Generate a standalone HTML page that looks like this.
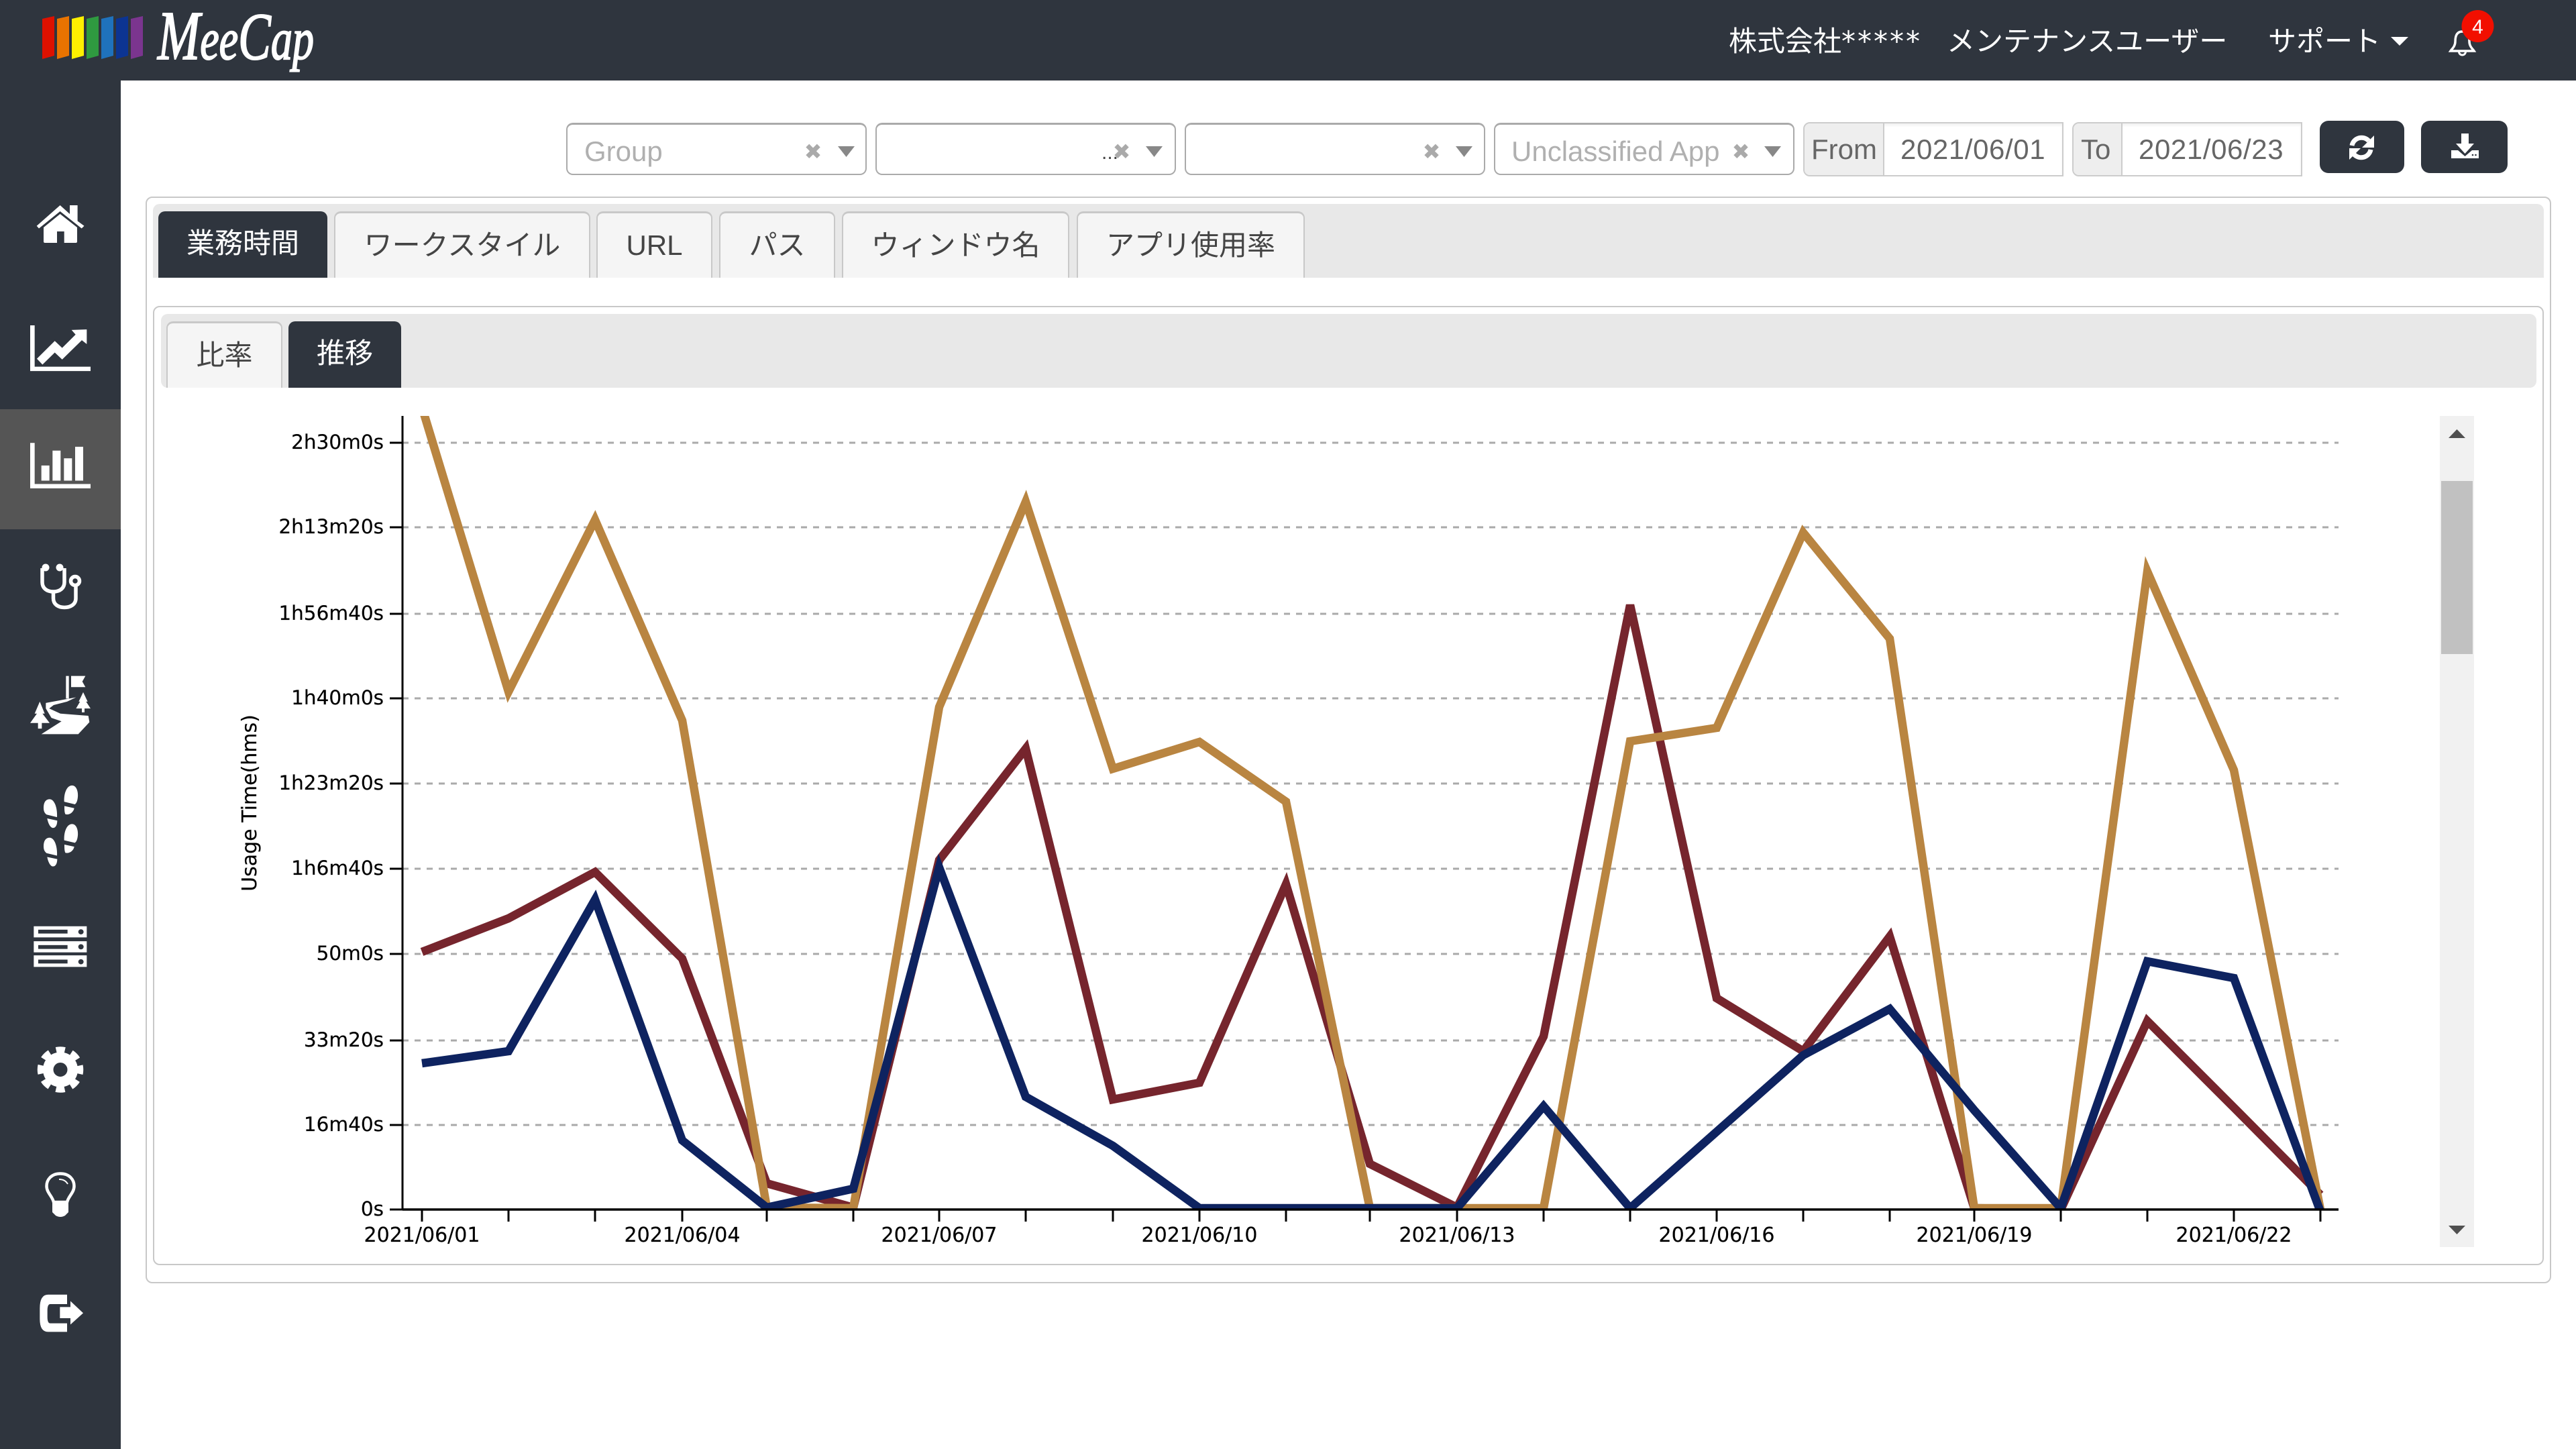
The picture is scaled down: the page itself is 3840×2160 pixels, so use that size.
<!DOCTYPE html>
<html lang="ja"><head><meta charset="utf-8"><title>MeeCap</title>
<style>
html,body{margin:0;padding:0;width:3840px;height:2160px;overflow:hidden;background:#fff}
body{position:relative;font-family:"Liberation Sans","Noto Sans CJK JP",sans-serif;font-size:42px;font-weight:400}
div{box-sizing:border-box}
.a{position:absolute}
.t{position:absolute;white-space:nowrap;line-height:42px;height:42px}
.sel{position:absolute;top:183px;width:448px;height:78px;border:2.5px solid #aaa;border-top-width:3px;border-radius:10px;background:#fff}
.ph{color:#b0b0b0}
.dt{color:#666}
.tab{position:absolute;top:315px;height:99px;background:#f5f5f5;border:2.5px solid #c8c8c8;border-top-width:3px;border-bottom:none;border-radius:10px 10px 0 0;color:#444;text-align:center;line-height:95px}
.act{background:#2f353e;border-color:#2f353e;color:#fff;line-height:89px}
.stab{top:479px;height:99px}
.box{position:absolute;border:2.5px solid #c8c8c8;border-radius:10px}
.btn{position:absolute;top:180px;height:78px;background:#2f353e;border-radius:13px}
.st{font-family:"DejaVu Sans",sans-serif;letter-spacing:3px}
</style></head><body>

<!-- header + sidebar -->
<div class="a" style="left:0;top:0;width:3840px;height:120px;background:#2f353e"></div>
<div class="a" style="left:0;top:0;width:180px;height:2160px;background:#2f353e"></div>
<div class="a" style="left:0;top:610px;width:180px;height:179px;background:#555"></div>

<!-- outer containers -->
<div class="box" style="left:217px;top:293px;width:3586px;height:1620px"></div>
<div class="a" style="left:228px;top:304px;width:3564px;height:110px;background:#e8e8e8;border-radius:10px 10px 0 0"></div>
<div class="box" style="left:228px;top:456px;width:3564px;height:1430px"></div>
<div class="a" style="left:240px;top:468px;width:3541px;height:110px;background:#e8e8e8;border-radius:10px 10px 10px 10px"></div>

<!-- tabs -->
<div class="tab act" style="left:236px;width:252px">業務時間</div>
<div class="tab" style="left:498px;width:382px">ワークスタイル</div>
<div class="tab" style="left:889px;width:173px">URL</div>
<div class="tab" style="left:1072px;width:173px">パス</div>
<div class="tab" style="left:1255px;width:339px">ウィンドウ名</div>
<div class="tab" style="left:1605px;width:340px">アプリ使用率</div>
<div class="tab stab" style="left:248px;width:173px">比率</div>
<div class="tab act stab" style="left:430px;width:168px">推移</div>

<!-- filters -->
<div class="sel" style="left:844px"></div>
<div class="sel" style="left:1305px"></div>
<div class="sel" style="left:1766px"></div>
<div class="sel" style="left:2227px"></div>
<div class="t ph" style="left:871px;top:205px">Group</div>
<div class="t ph" style="left:2253px;top:205px">Unclassified App</div>
<div class="t" style="left:1642px;top:213px;font-size:30px;line-height:30px;color:#444">...</div>

<!-- date ranges -->
<div class="a" style="left:2688px;top:182px;width:388px;height:81px;border:2.5px solid #ccc;border-right-width:2.5px;border-radius:10px 0 0 10px;background:#fff;box-shadow:inset 0 3px 3px rgba(0,0,0,.06)"></div>
<div class="a" style="left:2690px;top:184px;width:119px;height:77px;background:#eee;border-right:2.5px solid #ccc;border-radius:8px 0 0 8px"></div>
<div class="a" style="left:3089px;top:182px;width:343px;height:81px;border:2.5px solid #ccc;border-radius:10px 0 0 10px;background:#fff;box-shadow:inset 0 3px 3px rgba(0,0,0,.06)"></div>
<div class="a" style="left:3091px;top:184px;width:73px;height:77px;background:#eee;border-right:2.5px solid #ccc;border-radius:8px 0 0 8px"></div>
<div class="t dt" style="left:2700px;top:202px">From</div>
<div class="t dt" style="left:2833px;top:202px;letter-spacing:.6px">2021/06/01</div>
<div class="t dt" style="left:3102px;top:202px">To</div>
<div class="t dt" style="left:3188px;top:202px;letter-spacing:.6px">2021/06/23</div>
<div class="btn" style="left:3458px;width:126px"></div>
<div class="btn" style="left:3609px;width:129px"></div>

<!-- header text -->
<div class="t" style="left:2577px;top:41px;color:#fff">株式会社<span class="st">*****</span></div>
<div class="t" style="left:2902px;top:41px;color:#fff">メンテナンスユーザー</div>
<div class="t" style="left:3381px;top:41px;color:#fff">サポート</div>

<!-- vector layer -->
<svg class="a" style="left:0;top:0" width="3840" height="2160" viewBox="0 0 3840 2160" xmlns="http://www.w3.org/2000/svg">
<defs><clipPath id="c"><rect x="600" y="620" width="2886" height="1183"/></clipPath></defs>

<!-- logo -->
<g>
<polygon points="63,28 81,24 81,83 63,88" fill="#dd1100"/>
<polygon points="85,28 103,24 103,83 85,88" fill="#e87300"/>
<polygon points="107,28 125,24 125,83 107,88" fill="#fff000"/>
<polygon points="129,28 147,24 147,83 129,88" fill="#2f9a40"/>
<polygon points="151,28 169,24 169,83 151,88" fill="#1f72bc"/>
<polygon points="173,28 191,24 191,83 173,88" fill="#0c3492"/>
<polygon points="195,28 213,24 213,83 195,88" fill="#7b358f"/>
</g>
<text x="235" y="88" font-family="Liberation Serif,serif" font-style="italic" fill="#fff" stroke="#fff" stroke-width="2" textLength="233" lengthAdjust="spacingAndGlyphs" font-size="88"><tspan font-size="104">M</tspan>ee<tspan font-size="100">C</tspan>ap</text>

<!-- home -->
<path fill="#fff" d="M89.6 306L104 319V306H115.6V329.5L125.5 336.7L121.7 340.5L89.6 315L58 340.5L54.7 336.7Z"/>
<path fill="#fff" d="M89.6 319L115 339V360Q115 362 113 362H95.7V345H85V362H67Q65 362 65 360V339Z"/>

<!-- line chart + bars -->
<g transform="translate(0,400) scale(.33333,.3827)" fill="#fff">
<path d="M135 222H155V383H405V400H135Z"/>
<polygon points="165,352 245,283 278,310 338,258 320,240 388,238 388,295 366,280 278,355 245,328 190,375"/>
<path d="M135 680H155V840H405V857H135Z"/>
<rect x="185" y="768" width="36" height="59"/>
<rect x="235" y="710" width="36" height="117"/>
<rect x="286" y="740" width="36" height="87"/>
<rect x="336" y="695" width="36" height="132"/>
</g>

<!-- stethoscope -->
<g fill="none" stroke="#fff" stroke-width="5.5">
<path d="M63 847V868C63 877 70 882 79.5 882C89 882 96 877 96 868V847"/>
<path d="M79.5 882V892C79.5 901 87 905.5 96 905.5C105 905.5 113 901 113 892V873"/>
<circle cx="112" cy="866" r="6.5"/>
</g>
<circle cx="68" cy="846" r="5.5" fill="#fff"/><circle cx="89" cy="846" r="5.5" fill="#fff"/>

<!-- lower icons in zoom space -->
<g transform="translate(0,1000) scale(.33333,.6378)" fill="#fff">
<!-- flag + road + trees -->
<rect x="295" y="12" width="13" height="53"/>
<polygon points="318,12 382,12 368,25 382,38 318,38"/>
<polygon points="205,75 340,62 300,72 240,80 220,88 270,100 395,105 400,120 350,148 185,148 275,118 230,110 205,88"/>
<polygon points="178,72 200,100 190,100 222,122 187,122 187,135 170,135 170,122 135,122 165,100 155,100"/>
<polygon points="372,50 392,72 385,72 405,88 378,88 378,97 366,97 366,88 340,88 358,72 352,72"/>
<!-- footprints -->
<g>
<path d="M287 306C285 285 300 268 322 268C342 268 350 282 348 295C346 306 340 310 335 312Z"/>
<path d="M288 316L332 321C328 332 306 338 292 335C288 330 288 324 288 316Z"/>
<path d="M195 320C195 305 208 300 222 300C242 300 257 318 255 342L208 336C199 332 195 328 195 320Z"/>
<path d="M211 345L256 350C256 362 246 368 235 367C224 366 215 356 211 345Z"/>
</g>
<g transform="translate(0,90)">
<path d="M287 306C285 285 300 268 322 268C342 268 350 282 348 295C346 306 340 310 335 312Z"/>
<path d="M288 316L332 321C328 332 306 338 292 335C288 330 288 324 288 316Z"/>
<path d="M195 320C195 305 208 300 222 300C242 300 257 318 255 342L208 336C199 332 195 328 195 320Z"/>
<path d="M211 345L256 350C256 362 246 368 235 367C224 366 215 356 211 345Z"/>
</g>
<!-- server -->
<rect x="151" y="597" width="237" height="26"/><rect x="151" y="632" width="237" height="26"/><rect x="151" y="665" width="237" height="27"/>
<g fill="#2f353e">
<rect x="171" y="605" width="131" height="9"/><rect x="171" y="641" width="131" height="9"/><rect x="171" y="675" width="131" height="9"/>
<ellipse cx="362" cy="610" rx="12" ry="6"/><ellipse cx="362" cy="645" rx="12" ry="6"/><ellipse cx="362" cy="680" rx="12" ry="6"/>
</g>
<!-- sign out -->
<path d="M300 1458H215Q178 1458 178 1490V1515Q178 1545 215 1545H300V1525H225Q212 1525 212 1510V1495Q212 1480 225 1480H300Z"/>
<path d="M268 1487H315V1473L372 1501L315 1528V1513H268Z"/>
</g>

<!-- gear -->
<circle cx="90" cy="1594.5" r="17.5" fill="none" stroke="#fff" stroke-width="14"/>
<circle cx="90" cy="1594.5" r="29.5" fill="none" stroke="#fff" stroke-width="9.5" stroke-dasharray="13 10.17" stroke-dashoffset="6.5"/>
<circle cx="90" cy="1594.5" r="24" fill="none" stroke="#fff" stroke-width="4"/>

<!-- bulb -->
<path d="M90 1749.5C76 1749.5 69.5 1759 69.5 1768C69.5 1778 78 1783 80 1792H100C102 1783 110.5 1778 110.5 1768C110.5 1759 104 1749.5 90 1749.5Z" fill="none" stroke="#fff" stroke-width="4.5"/>
<path d="M78 1792H102V1807L97 1812Q90 1816 83 1812L78 1807Z" fill="#fff"/>
<path d="M88 1758Q97 1758 101 1765" fill="none" stroke="#fff" stroke-width="2"/>

<!-- clear x + arrows -->
<g fill="#aaa" font-family="DejaVu Sans,sans-serif" font-size="32" text-anchor="middle" font-weight="bold">
<text x="1212" y="237">✖</text><text x="1672" y="237">✖</text><text x="2134" y="237">✖</text><text x="2595" y="237">✖</text>
</g>
<g fill="#888">
<polygon points="1249,218 1274,218 1261.500,234"/>
<polygon points="1708,218 1733,218 1720.500,234"/>
<polygon points="2170,218 2195,218 2182.500,234"/>
<polygon points="2630,218 2655,218 2642.500,234"/>
</g>

<!-- refresh -->
<g fill="none" stroke="#fff" stroke-width="7">
<path d="M3506 217A14.500 14.500 0 0 1 3531 210"/>
<path d="M3534 223A14.500 14.500 0 0 1 3509 230"/>
</g>
<polygon points="3539,202 3539,220 3521,220" fill="#fff"/>
<polygon points="3502,238 3502,221 3519,221" fill="#fff"/>

<!-- download -->
<g fill="#fff">
<rect x="3669" y="199" width="11" height="16"/>
<polygon points="3661,214 3688,214 3674.500,229"/>
<path d="M3654 224H3664L3674.500 233L3685 224H3695V236H3654Z"/>
</g>
<circle cx="3686" cy="231" r="1.300" fill="#2f353e"/><circle cx="3690.500" cy="231" r="1.300" fill="#2f353e"/>

<!-- support caret -->
<polygon points="3564,55 3590,55 3577,68" fill="#fff"/>

<!-- bell -->
<path d="M3670.500 47C3661 47 3660 56 3660 62C3660 69 3655 73 3653 76H3688C3686 73 3681 69 3681 62C3681 56 3680 47 3670.500 47Z" fill="none" stroke="#fff" stroke-width="3.500"/>
<path d="M3665.500 77A5 5 0 0 0 3675.500 77" fill="none" stroke="#fff" stroke-width="3"/>
<circle cx="3693.500" cy="39" r="24" fill="#f20f00"/>
<text x="3693.500" y="50" fill="#fff" font-family="Liberation Sans,sans-serif" font-size="30" text-anchor="middle">4</text>

<!-- chart grid -->
<g stroke="#aaa" stroke-width="3" stroke-dasharray="9 9" fill="none">
<path d="M600 660H3486"/><path d="M600 786H3486"/><path d="M600 915H3486"/><path d="M600 1041H3486"/><path d="M600 1168H3486"/><path d="M600 1295H3486"/><path d="M600 1422H3486"/><path d="M600 1551H3486"/><path d="M600 1677H3486"/>
</g>

<!-- series -->
<g clip-path="url(#c)" fill="none" stroke-width="12.5">
<polyline stroke="#76252d" points="629,1419 758,1369 887,1300 1017,1429 1143,1764 1272,1800 1400,1282 1529,1116 1659,1639 1788,1614 1917,1318 2042,1735 2172,1800 2301,1545 2430,902 2559,1488 2688,1567 2817,1396 2943,1801 3072,1803 3201,1522 3330,1651 3459,1781"/>
<polyline stroke="#b98541" points="629,607 758,1031 887,775 1017,1074 1143,1800 1272,1801 1400,1054 1529,748 1659,1146 1788,1106 1917,1195 2042,1801 2172,1801 2301,1801 2430,1105 2559,1085 2688,794 2817,952 2943,1801 3072,1801 3201,852 3330,1148 3459,1803"/>
<polyline stroke="#0e2360" points="629,1585 758,1567 887,1341 1017,1700 1143,1800 1272,1772 1400,1293 1529,1635 1659,1708 1788,1801 1917,1801 2042,1801 2172,1801 2301,1649 2430,1801 2559,1687 2688,1573 2817,1504 2943,1655 3072,1801 3201,1433 3330,1458 3459,1806"/>
</g>

<!-- axes -->
<g stroke="#000" stroke-width="3" fill="none">
<path d="M600 620V1804"/><path d="M581 660H600M581 786H600M581 915H600M581 1041H600M581 1168H600M581 1295H600M581 1422H600M581 1551H600M581 1677H600M581 1803H600"/>
<path d="M629 1803V1821M758 1803V1821M887 1803V1821M1017 1803V1821M1143 1803V1821M1272 1803V1821M1400 1803V1821M1529 1803V1821M1659 1803V1821M1788 1803V1821M1917 1803V1821M2042 1803V1821M2172 1803V1821M2301 1803V1821M2430 1803V1821M2559 1803V1821M2688 1803V1821M2817 1803V1821M2943 1803V1821M3072 1803V1821M3201 1803V1821M3330 1803V1821M3459 1803V1821"/>
</g>
<path d="M600 1803H3486" stroke="#000" stroke-width="3.500" fill="none"/>

<!-- labels -->
<g font-family="DejaVu Sans,sans-serif" font-size="29.500" fill="#000" stroke="#000" stroke-width=".2" text-anchor="end">
<text x="572" y="669">2h30m0s</text><text x="572" y="795">2h13m20s</text><text x="572" y="924">1h56m40s</text><text x="572" y="1050">1h40m0s</text><text x="572" y="1177">1h23m20s</text><text x="572" y="1304">1h6m40s</text><text x="572" y="1431">50m0s</text><text x="572" y="1560">33m20s</text><text x="572" y="1686">16m40s</text><text x="572" y="1812">0s</text>
</g>
<g font-family="DejaVu Sans,sans-serif" font-size="30" fill="#000" stroke="#000" stroke-width=".2" text-anchor="middle">
<text x="629" y="1851">2021/06/01</text><text x="1017" y="1851">2021/06/04</text><text x="1400" y="1851">2021/06/07</text><text x="1788" y="1851">2021/06/10</text><text x="2172" y="1851">2021/06/13</text><text x="2559" y="1851">2021/06/16</text><text x="2943" y="1851">2021/06/19</text><text x="3330" y="1851">2021/06/22</text>
<text transform="translate(382,1197) rotate(-90)">Usage Time(hms)</text>
</g>

<!-- scrollbar -->
<rect x="3637" y="620" width="51" height="1239" fill="#f1f1f1"/>
<rect x="3639" y="717" width="47" height="258" fill="#c1c1c1"/>
<polygon points="3650,653 3675,653 3662.500,640" fill="#505050"/>
<polygon points="3650,1827 3675,1827 3662.500,1840" fill="#505050"/>
</svg>
</body></html>
